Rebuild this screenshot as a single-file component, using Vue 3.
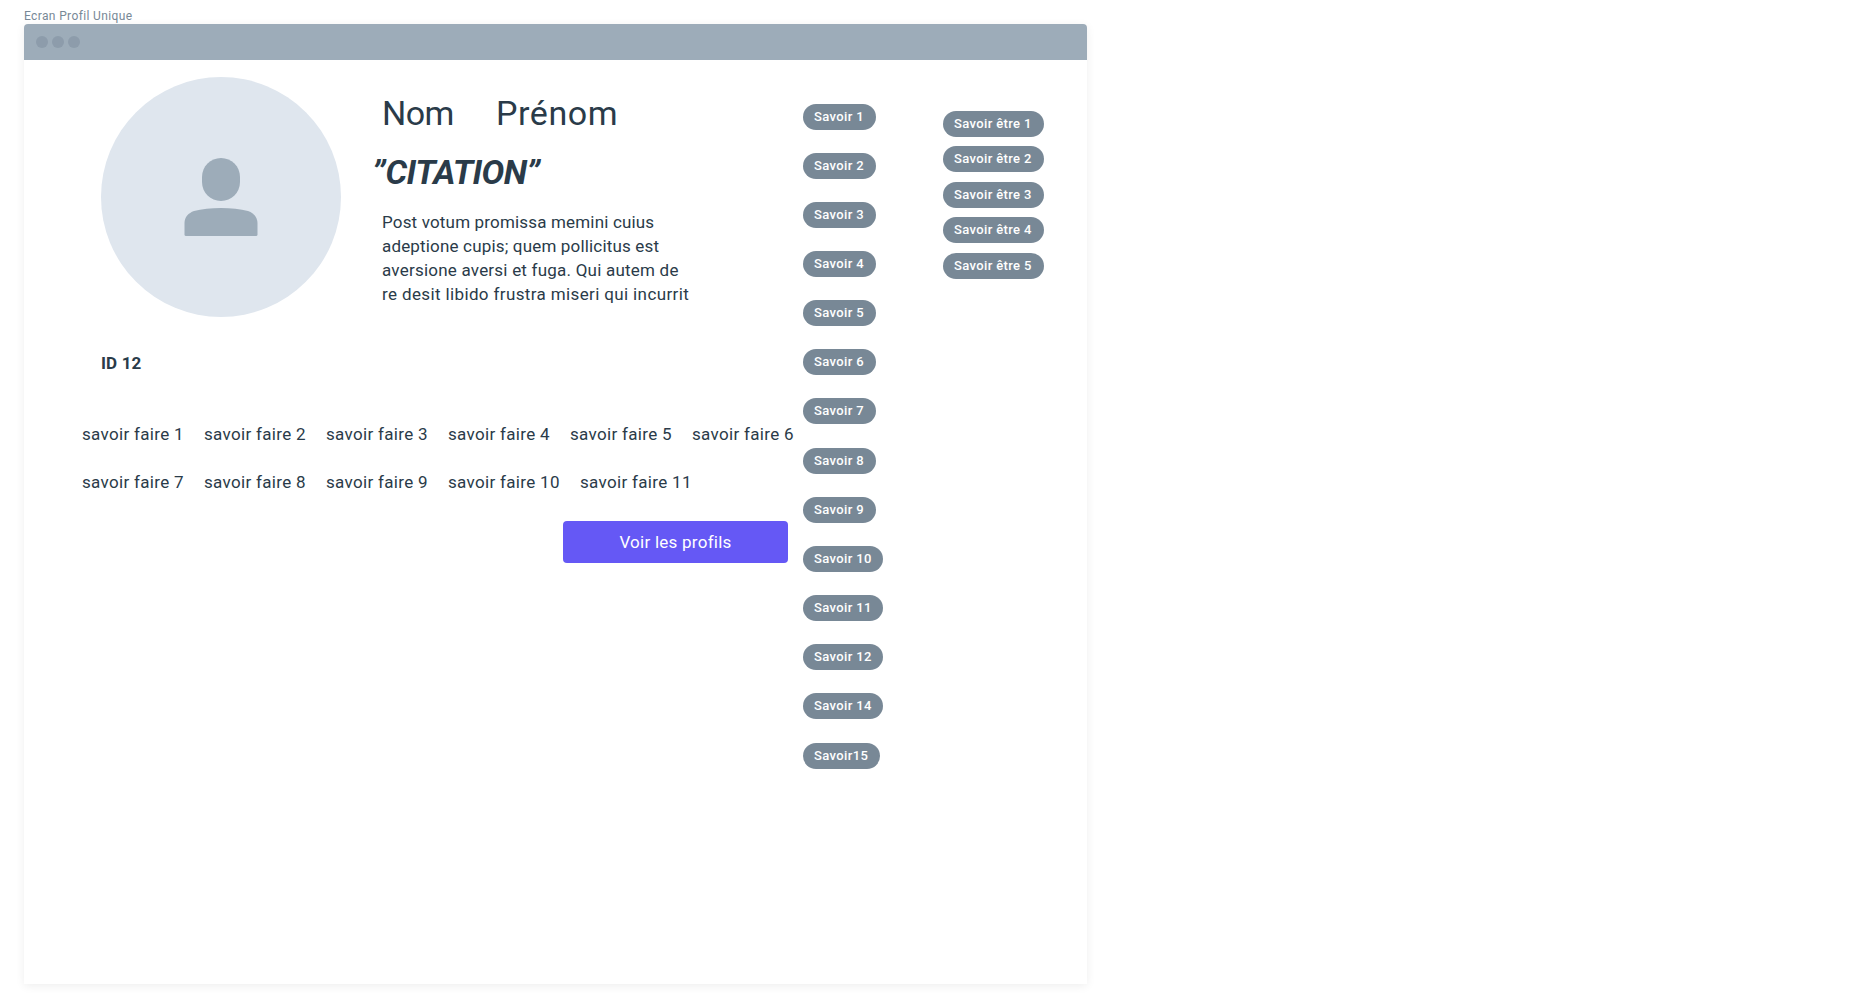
<script setup>
const bio = [
  { text: 'Post votum promissa memini cuius', tracking: 0.17 },
  { text: 'adeptione cupis; quem pollicitus est', tracking: 0.17 },
  { text: 'aversione aversi et fuga. Qui autem de', tracking: 0.22 },
  { text: 're desit libido frustra miseri qui incurrit', tracking: 0.37 },
]
const skillRows = [
  [1, 2, 3, 4, 5, 6],
  [7, 8, 9, 10, 11],
]
const knowledge = [
  ...[1, 2, 3, 4, 5, 6, 7, 8, 9, 10, 11, 12, 14].map((n) => `Savoir ${n}`),
  'Savoir15',
]
const softSkills = [1, 2, 3, 4, 5].map((n) => `Savoir être ${n}`)
</script>

<template>
  <main class="board">
    <div class="caption">Ecran Profil Unique</div>
    <section class="window">
      <header class="titlebar">
        <i class="dot"></i>
        <i class="dot"></i>
        <i class="dot"></i>
      </header>
      <div class="content">
        <div class="left">
          <div class="profile">
            <div class="avatar">
              <svg width="74" height="80" viewBox="0 0 74 80">
                <path d="M37 1C47.500 1 56 9.500 56 20V25C56 35.500 47.500 44 37 44S18 35.500 18 25V20C18 9.500 26.500 1 37 1Z" />
                <path d="M.5 77.500V66C.5 60 4.500 56 10 54C25 50 49 50 64 54C69.500 56 73.500 60 73.500 66V77.500Q73.500 79 72 79H2Q.5 79 .5 77.500Z" />
              </svg>
            </div>
            <div class="identity">
              <h1 class="name"><span class="last">Nom</span><span class="first">Prénom</span></h1>
              <h2 class="quote"><span>”</span><span class="word">CITATION</span><span>”</span></h2>
              <p class="bio">
                <span v-for="line in bio" :key="line.text" :style="{ letterSpacing: line.tracking + 'px' }">{{ line.text }}</span>
              </p>
            </div>
          </div>
          <div class="ident">ID 12</div>
          <div class="skills">
            <div v-for="(row, r) in skillRows" :key="r" class="skill-row">
              <span v-for="n in row" :key="n" :class="{ wide: n > 9 }">savoir faire {{ n }}</span>
            </div>
          </div>
          <button class="cta">Voir les profils</button>
        </div>
        <div class="tags knowledge">
          <span v-for="k in knowledge" :key="k" class="tag">{{ k }}</span>
        </div>
        <div class="tags soft">
          <span v-for="s in softSkills" :key="s" class="tag">{{ s }}</span>
        </div>
      </div>
    </section>
  </main>
</template>

<style>
body {
  margin: 0;
  background: #fff;
}
</style>

<style scoped>
.board {
  box-sizing: border-box;
  height: 1008px;
  padding: 8px 0 0 24px;
  overflow: hidden;
  font-family: Roboto, "Liberation Sans", sans-serif;
  color: #2a3b49;
}
.caption {
  height: 16px;
  line-height: 16px;
  font-size: 12px;
  letter-spacing: 0.37px;
  color: #788896;
}
.window {
  width: 1063px;
  height: 960px;
  border-radius: 4px 4px 0 0;
  background: #fff;
  box-shadow: 0 2px 10px rgba(0, 0, 0, 0.07);
}
.titlebar {
  display: flex;
  align-items: center;
  gap: 4px;
  height: 36px;
  padding-left: 12px;
  border-radius: 4px 4px 0 0;
  background: #9dacb9;
}
.dot {
  width: 12px;
  height: 12px;
  border-radius: 50%;
  background: #8d9cab;
}
.content {
  display: flex;
  align-items: flex-start;
}
.left {
  display: flex;
  flex-direction: column;
  width: 779px;
  font-size: 17px;
}
.profile {
  display: flex;
  padding: 17px 0 0 77px;
}
.avatar {
  display: flex;
  justify-content: center;
  align-items: center;
  width: 240px;
  height: 240px;
  border-radius: 50%;
  background: #dfe6ee;
}
.avatar svg {
  fill: #9dacb9;
}
.identity {
  margin-left: 31px;
}
.name,
.quote {
  margin: 0;
  font-size: 34px;
  line-height: 40px;
  white-space: nowrap;
}
.name {
  display: flex;
  padding: 16px 0 0 10px;
  font-weight: 400;
}
.last {
  width: 114px;
  letter-spacing: -0.6px;
}
.first {
  letter-spacing: 0.6px;
}
.quote {
  margin-top: 19px;
  font-weight: 700;
  font-style: italic;
}
.word {
  letter-spacing: -0.6px;
}
.bio {
  display: flex;
  flex-direction: column;
  margin: 18px 0 0 10px;
  line-height: 24px;
  white-space: nowrap;
}
.ident {
  margin: 34px 0 0 77px;
  line-height: 24px;
  font-weight: 700;
  letter-spacing: 0.15px;
}
.skills {
  display: flex;
  flex-direction: column;
  gap: 24px;
  margin: 47px 0 0 58px;
}
.skill-row {
  display: flex;
  line-height: 24px;
  letter-spacing: 0.32px;
  white-space: nowrap;
}
.skill-row span {
  flex: 0 0 122px;
}
.skill-row .wide {
  flex-basis: 132px;
}
.cta {
  width: 225px;
  height: 42px;
  margin: 27px 0 0 539px;
  padding: 0;
  border: 0;
  border-radius: 4px;
  background: #6558f5;
  color: #fff;
  font: inherit;
  letter-spacing: 0.25px;
}
.tags {
  display: flex;
  flex-direction: column;
  align-items: flex-start;
}
.knowledge {
  gap: 23px;
  width: 140px;
  padding-top: 44px;
}
.knowledge .tag:nth-child(8),
.knowledge .tag:nth-child(14) {
  margin-top: 1px;
}
.knowledge .tag {
  width: 73px;
}
.knowledge .tag:nth-child(n + 10) {
  width: 80px;
}
.knowledge .tag:last-child {
  width: 77px;
}
.soft {
  gap: 9px;
  padding-top: 51px;
}
.soft .tag {
  width: 101px;
}
.soft .tag:nth-child(odd):not(:first-child) {
  margin-top: 1px;
}
.tag {
  box-sizing: border-box;
  height: 26px;
  padding-left: 11px;
  border-radius: 13px;
  background: #788896;
  color: #fff;
  font-size: 13px;
  font-weight: 500;
  line-height: 25px;
  letter-spacing: 0.37px;
  white-space: nowrap;
}
</style>
